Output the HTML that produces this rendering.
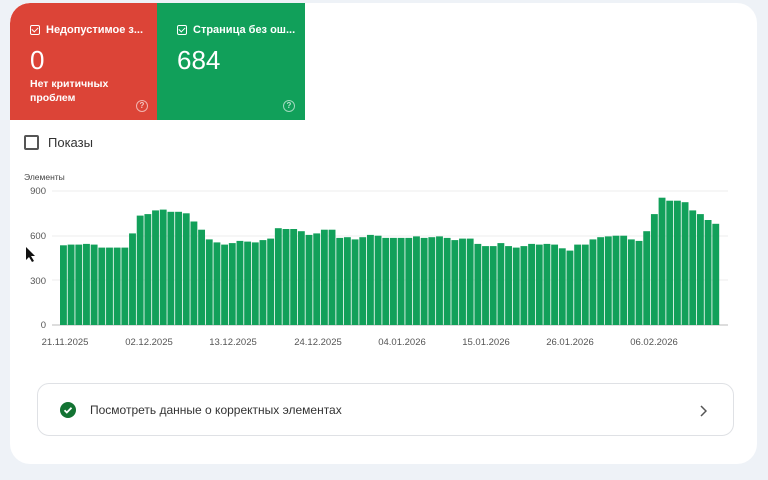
<!DOCTYPE html>
<html><head><meta charset="utf-8"><style>
*{margin:0;padding:0;box-sizing:border-box}
body{width:768px;height:480px;background:#eef2f7;font-family:"Liberation Sans",Arial,sans-serif;position:relative;overflow:hidden}
.card{position:absolute;left:10px;top:3px;width:747px;height:461px;background:#fff;border-radius:20px;overflow:hidden}
.tile{position:absolute;top:0;height:117px;width:148px;color:#fff}
.red{left:0;background:#dc4437;border-top-left-radius:20px}
.green{left:147px;background:#11a05a}
.ttl{position:absolute;left:20px;top:21px;font-size:11px;font-weight:bold;display:flex;align-items:center;gap:6px;white-space:nowrap}
.cb{width:10px;height:10px;border:1.3px solid #fff;border-radius:2px;position:relative}
.cb:after{content:"";position:absolute;left:2px;top:0px;width:3px;height:5px;border:solid #fff;border-width:0 1.3px 1.3px 0;transform:rotate(45deg)}
.num{position:absolute;left:20px;top:42px;font-size:26px}
.sub{position:absolute;left:20px;top:74px;font-size:10.5px;font-weight:bold;line-height:14px}
.q{position:absolute;right:10px;bottom:8px;width:12px;height:12px;border:1.2px solid rgba(255,255,255,.6);border-radius:50%;font-size:8px;text-align:center;line-height:10px;color:rgba(255,255,255,.7);font-weight:bold}
.pk{position:absolute;left:14px;top:132px;display:flex;align-items:center;gap:9px;font-size:13px;color:#333}
.pk .b{width:15px;height:15px;border:2px solid #555;border-radius:2px}
.link{position:absolute;left:27px;top:380px;width:697px;height:53px;border:1px solid #dfe1e5;border-radius:12px}
.link .ic{position:absolute;left:22px;top:18px;width:16px;height:16px;border-radius:50%;background:#137333}
.link .t{position:absolute;left:52px;top:19px;font-size:12px;color:#333}
</style></head><body>
<div class="card">
<div class="tile red"><div class="ttl"><div class="cb"></div>Недопустимое з...</div><div class="num">0</div><div class="sub">Нет критичных<br>проблем</div><div class="q">?</div></div>
<div class="tile green"><div class="ttl"><div class="cb"></div>Страница без ош...</div><div class="num">684</div><div class="q">?</div></div>
<div class="pk"><div class="b"></div>Показы</div>
<div class="link"><div class="ic"><svg width="16" height="16"><path d="M4.5 8.2l2.3 2.3 4.7-4.8" stroke="#fff" stroke-width="1.8" fill="none"/></svg></div><div class="t">Посмотреть данные о корректных элементах</div>
<svg style="position:absolute;right:26px;top:21px" width="8" height="12"><path d="M2 1l5 5-5 5" stroke="#555" stroke-width="1.5" fill="none"/></svg></div>
</div>
<svg id="ch" style="position:absolute;left:0;top:0" width="768" height="360" font-family="Liberation Sans,Arial,sans-serif" font-size="9.5" fill="#555">
<text x="24" y="180" font-size="8.5" fill="#444">Элементы</text>
<g stroke="#ececec"><line x1="52" x2="728" y1="191" y2="191"/><line x1="52" x2="728" y1="236" y2="236"/><line x1="52" x2="728" y1="280" y2="280"/></g>
<line x1="52" x2="728" y1="325" y2="325" stroke="#bbb"/>
<g text-anchor="end"><text x="46" y="194">900</text><text x="46" y="239">600</text><text x="46" y="284">300</text><text x="46" y="328">0</text></g>
<g text-anchor="middle"><text x="65" y="345">21.11.2025</text><text x="149" y="345">02.12.2025</text><text x="233" y="345">13.12.2025</text><text x="318" y="345">24.12.2025</text><text x="402" y="345">04.01.2026</text><text x="486" y="345">15.01.2026</text><text x="570" y="345">26.01.2026</text><text x="654" y="345">06.02.2026</text></g>
<g id="bars" fill="#12a05a"></g>
<path d="M26 247v13l3-3 3 5 2-1-3-5h4z" fill="#111"/>
</svg>
<script>
var v=[535,540,540,545,540,520,520,520,520,615,735,745,770,775,760,760,750,695,640,575,555,540,550,565,560,555,570,580,650,645,645,630,605,615,640,640,585,590,575,590,605,600,585,585,585,585,595,585,590,595,585,570,580,580,545,530,530,550,530,520,530,545,540,545,540,515,500,540,540,575,590,595,600,600,575,565,630,745,855,835,835,825,770,745,705,680];
var g=document.getElementById('bars'),s='',x0=60,w=(720-60)/v.length;
for(var i=0;i<v.length;i++){var h=v[i]*134/900;s+='<rect x="'+(x0+i*w).toFixed(2)+'" y="'+(325-h).toFixed(1)+'" width="'+(w-0.8).toFixed(2)+'" height="'+h.toFixed(1)+'"/>';}
g.innerHTML=s;
</script>
</body></html>
